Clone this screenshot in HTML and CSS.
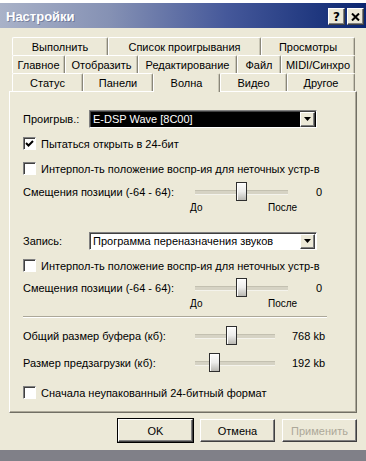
FILE: index.html
```html
<!DOCTYPE html>
<html lang="ru">
<head>
  <meta charset="UTF-8" />
  <title>Настройки</title>
  <link rel="stylesheet" href="styles.css">
</head>
<body>

  <div class="window">
    <div class="top-strip"></div>

    <div class="titlebar">
      <span class="title">Настройки</span>
      <div class="title-btns">
        <div class="tbtn help">?</div>
        <div class="tbtn close">
          <svg width="9" height="8" viewBox="0 0 9 8"><path d="M1 0.5 L8 7.5 M8 0.5 L1 7.5" stroke="#000" stroke-width="2"/></svg>
        </div>
      </div>
    </div>

    <div class="dialog">
      <div class="tabs">
        <div class="tab-row">
          <div class="tab" style="width:96px">Выполнить</div>
          <div class="tab" style="width:153px">Список проигрывания</div>
          <div class="tab" style="width:94px">Просмотры</div>
        </div>
        <div class="tab-row">
          <div class="tab" style="width:53px">Главное</div>
          <div class="tab" style="width:73px">Отобразить</div>
          <div class="tab" style="width:99px">Редактирование</div>
          <div class="tab" style="width:44px">Файл</div>
          <div class="tab" style="width:74px">MIDI/Синхро</div>
        </div>
        <div class="tab-row front">
          <div class="tab" style="width:71px">Статус</div>
          <div class="tab" style="width:70px">Панели</div>
          <div class="tab active" style="width:67px">Волна</div>
          <div class="tab" style="width:67px">Видео</div>
          <div class="tab" style="width:68px">Другое</div>
        </div>
      </div>

      <div class="panel">
        <div class="row select-row">
          <span class="label">Проигрыв.:</span>
          <div class="combo focused">
            <span class="combo-text">E-DSP Wave [8C00]</span>
            <div class="combo-btn"><svg width="7" height="4" viewBox="0 0 7 4"><path d="M0 0 H7 L3.5 4 Z" fill="#000"/></svg></div>
          </div>
        </div>

        <label class="check-row gap-9">
          <span class="box"><svg width="9" height="9" viewBox="0 0 9 9"><path d="M1 4 L3.5 6.5 L8 2" stroke="#000" stroke-width="2" fill="none"/></svg></span>
          Пытаться открыть в 24-бит
        </label>

        <label class="check-row gap-12">
          <span class="box"></span>
          Интерпол-ть положение воспр-ия для неточных устр-в
        </label>

        <div class="row slider-row gap-7">
          <span class="label wide">Смещения позиции (-64 - 64):</span>
          <div class="slider long"><div class="thumb" style="left:41px"></div></div>
          <span class="value">0</span>
        </div>
        <div class="ticks">
          <span>До</span>
          <span>После</span>
        </div>

        <div class="row select-row gap-19">
          <span class="label">Запись:</span>
          <div class="combo">
            <span class="combo-text">Программа переназначения звуков</span>
            <div class="combo-btn"><svg width="7" height="4" viewBox="0 0 7 4"><path d="M0 0 H7 L3.5 4 Z" fill="#000"/></svg></div>
          </div>
        </div>

        <label class="check-row gap-9">
          <span class="box"></span>
          Интерпол-ть положение воспр-ия для неточных устр-в
        </label>

        <div class="row slider-row gap-6">
          <span class="label wide">Смещения позиции (-64 - 64):</span>
          <div class="slider long"><div class="thumb" style="left:41px"></div></div>
          <span class="value">0</span>
        </div>
        <div class="ticks">
          <span>До</span>
          <span>После</span>
        </div>

        <div class="separator gap-7"></div>

        <div class="row slider-row gap-8">
          <span class="label wide">Общий размер буфера (кб):</span>
          <div class="slider short"><div class="thumb" style="left:31px"></div></div>
          <span class="value kb">768 kb</span>
        </div>

        <div class="row slider-row gap-8">
          <span class="label wide">Размер предзагрузки (кб):</span>
          <div class="slider short"><div class="thumb" style="left:14px"></div></div>
          <span class="value kb">192 kb</span>
        </div>

        <label class="check-row gap-14">
          <span class="box"></span>
          Сначала неупакованный 24-битный формат
        </label>
      </div>

      <div class="buttons">
        <div class="btn default">OK</div>
        <div class="btn">Отмена</div>
        <div class="btn disabled">Применить</div>
      </div>
    </div>

    <div class="bottom-strip"></div>
  </div>

</body>
</html>
```

FILE: styles.css
```css
body {
  margin: 0;
  padding: 0;
  background: #ece9d8;
  font-family: 'Liberation Sans', Arial, sans-serif;
  font-size: 11px;
  color: #000;
}

.window {
  width: 366px;
  height: 461px;
  display: flex;
  flex-direction: column;
  overflow: hidden;
}

.top-strip {
  height: 3px;
  flex-shrink: 0;
  background: #fff;
}

/* title bar */
.titlebar {
  height: 25px;
  flex-shrink: 0;
  box-sizing: border-box;
  display: flex;
  align-items: center;
  justify-content: space-between;
  padding: 2px 2px 0 6px;
  background: linear-gradient(to right, #a9b2c8 0%, #8591b4 30%, #45589a 62%, #0b2670 100%);
}

.title {
  font-family: 'Liberation Sans', Arial, sans-serif;
  font-weight: bold;
  font-size: 13px;
  color: #fff;
  text-shadow: 1px 1px 0 rgba(40, 50, 90, 0.35);
}

.title-btns {
  display: flex;
  gap: 2px;
}

.tbtn {
  width: 15px;
  height: 15px;
  background: #ece9d8;
  border: 1px solid;
  border-color: #fff #404040 #404040 #fff;
  box-shadow: inset -1px -1px 0 #808080;
  display: flex;
  align-items: center;
  justify-content: center;
  font-family: 'DejaVu Sans', sans-serif;
  font-weight: bold;
  font-size: 12px;
  line-height: 1;
}

/* dialog body */
.dialog {
  height: 422px;
  flex-shrink: 0;
  box-sizing: border-box;
  padding: 9px 9px 0 9px;
  display: flex;
  flex-direction: column;
}

.tabs {
  padding-left: 3px;
}

.tab-row {
  display: flex;
  height: 18px;
}

.tab {
  box-sizing: border-box;
  height: 18px;
  border-top: 1px solid #fff;
  border-left: 1px solid #fff;
  border-right: 1px solid #8a877a;
  box-shadow: inset -1px 0 0 #c8c5b4;
  border-radius: 2px 2px 0 0;
  display: flex;
  align-items: center;
  justify-content: center;
  white-space: nowrap;
}

.tab-row.front .tab {
  position: relative;
}

.tab.active {
  border-top-color: #ece9d8;
  height: 19px;
  margin-bottom: -1px;
  background: #ece9d8;
  z-index: 2;
}

.panel {
  height: 322px;
  flex-shrink: 0;
  box-sizing: border-box;
  border: 1px solid;
  border-color: #fff #716f64 #716f64 #fff;
  box-shadow: inset -1px -1px 0 #aca899;
  padding: 18px 0 0 13px;
  display: flex;
  flex-direction: column;
}

.panel > * {
  flex-shrink: 0;
}

.row {
  display: flex;
  align-items: center;
}

.select-row {
  height: 18px;
}

.label {
  width: 66px;
}

.label.wide {
  width: 172px;
}

.combo {
  width: 228px;
  height: 18px;
  box-sizing: border-box;
  border: 1px solid;
  border-color: #808080 #fff #fff #808080;
  box-shadow: inset 1px 1px 0 #404040;
  background: #fff;
  display: flex;
  align-items: center;
  justify-content: space-between;
  padding: 0 1px 0 3px;
}

.combo.focused {
  background: #000;
  color: #fff;
}

.combo-btn {
  width: 13px;
  height: 13px;
  background: #ece9d8;
  border: 1px solid;
  border-color: #fff #404040 #404040 #fff;
  box-shadow: inset -1px -1px 0 #808080;
  display: flex;
  align-items: center;
  justify-content: center;
}

.check-row {
  display: flex;
  align-items: center;
  height: 13px;
}

.box {
  width: 13px;
  height: 13px;
  box-sizing: border-box;
  border: 1px solid;
  border-color: #808080 #fff #fff #808080;
  box-shadow: inset 1px 1px 0 #404040;
  background: #fff;
  margin-right: 5px;
  display: flex;
  align-items: center;
  justify-content: center;
}

.slider-row {
  height: 19px;
}

.slider {
  position: relative;
  height: 19px;
}

.slider::before {
  content: "";
  position: absolute;
  left: 0;
  right: 0;
  top: 8px;
  height: 3px;
  background: #d6d3c4;
  border-top: 1px solid #c3c0b0;
  border-bottom: 1px solid #f4f3ec;
}

.slider.long {
  width: 93px;
  margin-right: 28px;
}

.slider.short {
  width: 80px;
  margin-right: 17px;
}

.thumb {
  position: absolute;
  top: 0;
  width: 11px;
  height: 19px;
  box-sizing: border-box;
  border: 1px solid #2e2e2e;
  background: linear-gradient(to bottom, #fdfdfc 0%, #ececea 50%, #b9b8b2 100%);
  box-shadow: inset 1px 1px 0 #fff;
}

.ticks {
  display: flex;
  height: 12px;
  align-items: center;
  padding-left: 167px;
  font-size: 10px;
}

.ticks span:first-child {
  width: 78px;
}

.separator {
  width: 304px;
  border-top: 1px solid #aca899;
  border-bottom: 1px solid #fff;
}

.gap-6 { margin-top: 6px; }
.gap-7 { margin-top: 7px; }
.gap-8 { margin-top: 8px; }
.gap-9 { margin-top: 9px; }
.gap-12 { margin-top: 12px; }
.gap-14 { margin-top: 14px; }
.gap-19 { margin-top: 19px; }

/* bottom buttons */
.buttons {
  display: flex;
  justify-content: flex-end;
  gap: 7px;
  margin-top: 6px;
}

.btn {
  width: 75px;
  height: 23px;
  box-sizing: border-box;
  border: 1px solid;
  border-color: #fff #404040 #404040 #fff;
  box-shadow: inset -1px -1px 0 #808080;
  display: flex;
  align-items: center;
  justify-content: center;
}

.btn.default {
  outline: 1px solid #000;
  outline-offset: 0;
}

.btn.disabled {
  color: #aca899;
}

.bottom-strip {
  height: 11px;
  flex-shrink: 0;
  background: #808088;
}
```
